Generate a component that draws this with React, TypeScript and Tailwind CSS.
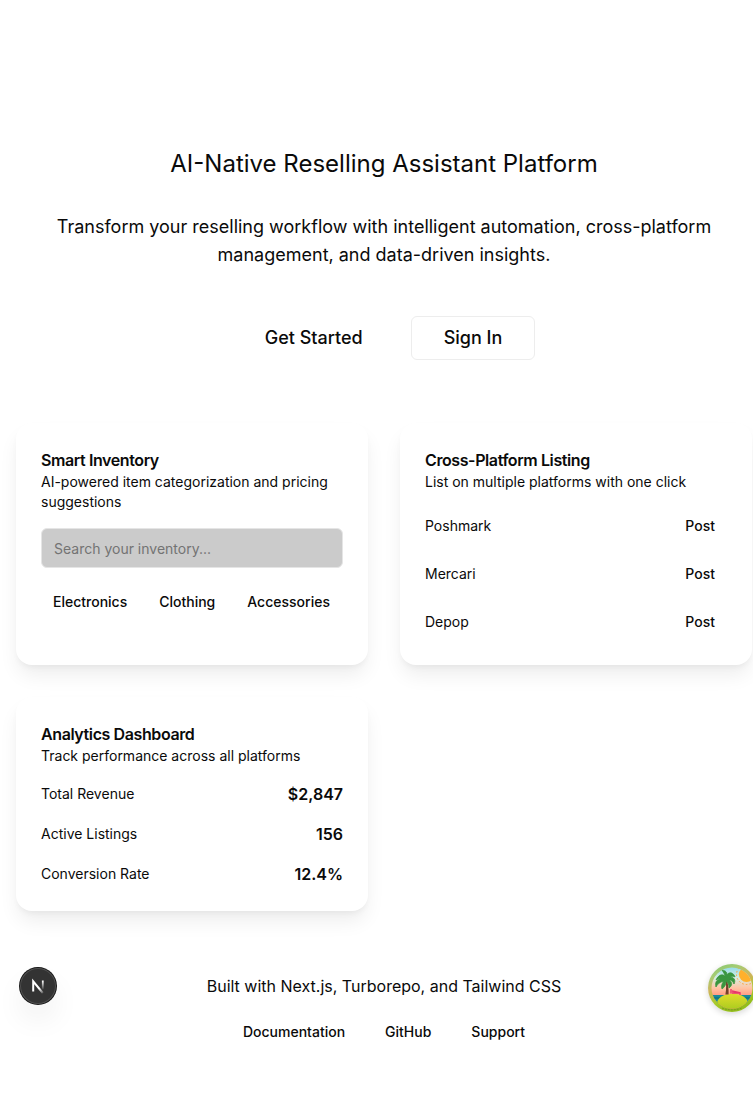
import type { ReactNode } from "react";

const listings = ["Poshmark", "Mercari", "Depop"];
const categories = ["Electronics", "Clothing", "Accessories"];
const metrics = [
  { label: "Total Revenue", value: "$2,847" },
  { label: "Active Listings", value: "156" },
  { label: "Conversion Rate", value: "12.4%" },
];
const links = ["Documentation", "GitHub", "Support"];

function Card({ title, description, children }: { title: string; description: string; children: ReactNode }) {
  return (
    <section className="flex flex-col gap-4 rounded-2xl bg-white p-[25px] shadow-[0_12px_20px_-2px_rgba(0,0,0,0.07),0_4px_6px_-2px_rgba(0,0,0,0.05)]">
      <header>
        <h2 className="text-base font-semibold leading-6 tracking-tight">{title}</h2>
        <p className="text-sm">{description}</p>
      </header>
      {children}
    </section>
  );
}

function DevBadge() {
  return (
    <button
      type="button"
      aria-label="Open developer tools"
      className="absolute bottom-[110px] left-5 size-9 rounded-full bg-[#333333] shadow-[0_0_0_1px_#171717,inset_0_0_0_1px_rgba(255,255,255,0.14),0_16px_32px_-8px_rgba(0,0,0,0.2)]"
    >
      <svg viewBox="0 0 36 36" className="size-9" fill="none">
        <defs>
          <linearGradient id="stem" x1="23" y1="13" x2="23" y2="22" gradientUnits="userSpaceOnUse">
            <stop stopColor="#fff" />
            <stop offset="1" stopColor="#fff" stopOpacity="0" />
          </linearGradient>
          <linearGradient id="diagonal" x1="20" y1="20" x2="24" y2="25" gradientUnits="userSpaceOnUse">
            <stop stopColor="#fff" />
            <stop offset="1" stopColor="#fff" stopOpacity="0.1" />
          </linearGradient>
        </defs>
        <path d="M13.200 23.500V13.400L22.800 25" stroke="url(#diagonal)" strokeWidth="2" />
        <path d="M22.800 12.500v9" stroke="url(#stem)" strokeWidth="1.800" />
      </svg>
    </button>
  );
}

function IslandBadge() {
  return (
    <button
      type="button"
      aria-label="Open query devtools"
      className="absolute bottom-[102px] -right-[3px] size-12 rounded-full shadow-[0_2px_6px_rgba(0,0,0,0.16)]"
    >
      <svg viewBox="0 0 48 48" className="size-12">
        <defs>
          <linearGradient id="rim" x1="0" y1="0" x2="0.4" y2="1">
            <stop stopColor="#7cc56f" />
            <stop offset="0.25" stopColor="#a5cc74" />
            <stop offset="0.5" stopColor="#cfb45c" />
            <stop offset="0.75" stopColor="#a8cb2c" />
            <stop offset="1" stopColor="#93bd1c" />
          </linearGradient>
          <linearGradient id="sky" x1="0" y1="0" x2="0" y2="1">
            <stop stopColor="#7fd7ee" />
            <stop offset="0.3" stopColor="#d9ece0" />
            <stop offset="0.5" stopColor="#ffc4a4" />
            <stop offset="0.7" stopColor="#ff8f78" />
          </linearGradient>
          <linearGradient id="sand" x1="0" y1="0" x2="0" y2="1">
            <stop stopColor="#e2dc2b" />
            <stop offset="1" stopColor="#9cc91c" />
          </linearGradient>
          <clipPath id="disc">
            <circle cx="24" cy="24" r="20.5" />
          </clipPath>
        </defs>
        <circle cx="24" cy="24" r="24" fill="url(#rim)" />
        <g clipPath="url(#disc)">
          <rect width="48" height="48" fill="url(#sky)" />
          <circle cx="38.500" cy="10.500" r="10" fill="none" stroke="#ff9d2e" strokeWidth="1" strokeDasharray="1.500 2.200" />
          <circle cx="38.500" cy="10.500" r="7.600" fill="#ffb02c" />
          <rect y="31" width="48" height="8" fill="#168a99" />
          <path d="M3 34h12M33 34h12" stroke="#0d6779" strokeWidth="1" />
          <ellipse cx="24.500" cy="39.500" rx="15.500" ry="9.800" fill="url(#sand)" />
          <path d="M23 25v4.500M24 27l8 1.800v2.200M24 29h7" stroke="#e8396a" strokeWidth="1.400" fill="none" />
          <path d="M17.200 15c1.200 5 1.200 10 .2 15.500h3.200c.2-6-.4-10.500-2-15.500z" fill="#75402a" />
          <path d="M18 14c-1-4-7-5-10 2 3-2 4-1 4-1-4 1-5 4-4 8 2-4 5-5 8-6-2 2-3 5-2 8 3-2 4-5 4-8 2 1 3 4 3 7 4-3 3-6 0-8 3 0 4 2 5 4 2-4 0-7-4-7 2-1 4-1 5 0-1-4-6-6-8-2 0-3-1-4-5-5 2 3 3 5 4 8z" fill="#39963f" stroke="#39963f" strokeWidth="0.800" />
        </g>
        <path d="M14 44c6 2.500 14 2.500 20 0" fill="none" stroke="#748c21" strokeWidth="0.800" strokeDasharray="2 1" />
      </svg>
    </button>
  );
}

export default function App() {
  return (
    <div className="relative overflow-hidden bg-white pb-16 pl-4 pr-px pt-[147px] font-['Inter',sans-serif] text-[#0a0a0a]">
      <main>
        <div className="mb-[63px] text-center">
          <h1 className="mb-8 text-2xl leading-[34px]">AI-Native Reselling Assistant Platform</h1>
          <p className="mx-auto mb-[47px] max-w-2xl text-lg leading-7">
            Transform your reselling workflow with intelligent automation, cross-platform management, and data-driven insights.
          </p>
          <div className="flex justify-center gap-4">
            <button type="button" className="h-11 rounded-md px-8 text-lg font-medium">Get Started</button>
            <button type="button" className="h-11 rounded-md border border-[#ededed] px-8 text-lg font-medium">Sign In</button>
          </div>
        </div>

        <div className="grid grid-cols-2 gap-8">
          <Card title="Smart Inventory" description="AI-powered item categorization and pricing suggestions">
            <input
              type="search"
              aria-label="Search your inventory"
              placeholder="Search your inventory..."
              className="h-10 w-full rounded-md border border-[#e5e5e5] bg-[#cbcbcb] px-3 text-sm placeholder:text-[#737373]"
            />
            <div className="flex gap-2">
              {categories.map((name) => (
                <button key={name} type="button" className="h-9 rounded-md px-3 text-sm font-medium">{name}</button>
              ))}
            </div>
          </Card>

          <Card title="Cross-Platform Listing" description="List on multiple platforms with one click">
            <ul className="flex flex-col gap-3">
              {listings.map((name) => (
                <li key={name} className="flex items-center justify-between text-sm">
                  <span>{name}</span>
                  <button type="button" className="h-9 rounded-md px-3 font-medium">Post</button>
                </li>
              ))}
            </ul>
          </Card>

          <Card title="Analytics Dashboard" description="Track performance across all platforms">
            <dl className="flex flex-col gap-4">
              {metrics.map(({ label, value }) => (
                <div key={label} className="flex items-center justify-between">
                  <dt className="text-sm">{label}</dt>
                  <dd className="font-semibold">{value}</dd>
                </div>
              ))}
            </dl>
          </Card>
        </div>
      </main>

      <footer className="mt-[63px] text-center">
        <p>Built with Next.js, Turborepo, and Tailwind CSS</p>
        <nav className="mt-4 flex justify-center gap-4">
          {links.map((name) => (
            <a key={name} href="#" className="flex h-9 items-center px-3 text-sm font-medium">{name}</a>
          ))}
        </nav>
      </footer>

      <DevBadge />
      <IslandBadge />
    </div>
  );
}
